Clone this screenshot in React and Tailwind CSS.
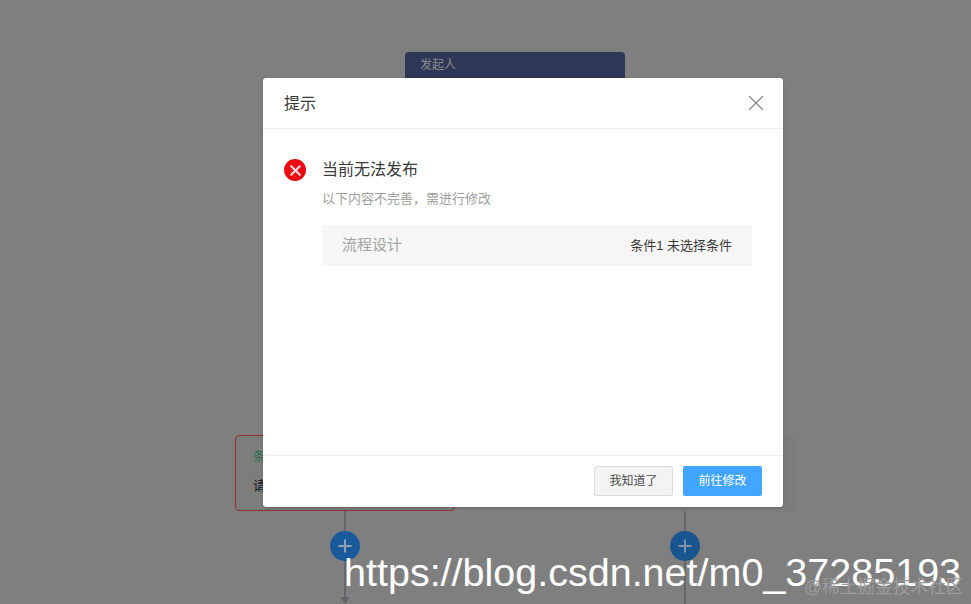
import React from 'react'
import { X, Plus } from 'lucide-react'

const cjk = 'font-["Liberation_Sans","Noto_Sans_CJK_SC",sans-serif]'

// flow diagram lying behind the dialog
const FlowCanvas = () => (
  <div className="absolute inset-0">
    <div className="absolute left-[405px] top-[52px] w-[220px] h-[40px] rounded-t-[4px] bg-[#2f3757] pl-[15px] pt-[5px] text-[12px] leading-[17px] text-[#8b8c90]">
      发起人
    </div>

    <div className="absolute left-[235px] top-[435px] w-[220px] h-[76px] rounded-[4px] border border-[#8e3236] bg-[#7d7d7d] pl-[17px] pt-[11px]">
      <div className="text-[12px] leading-[20px] text-[#1f6f4a]">条件1</div>
      <div className="mt-[9px] text-[13px] leading-[20px] text-[#161616]">请设置条件</div>
    </div>
    <div className="absolute left-[575px] top-[435px] w-[220px] h-[76px] rounded-[4px] bg-[#7c7c7c]" />

    <div className="absolute left-[344px] top-[511px] w-[2px] h-[90px] bg-[#666668]" />
    <div className="absolute left-[684px] top-[511px] w-[2px] h-[93px] bg-[#666668]" />
    <div className="absolute left-[340px] top-[597px] w-0 h-0 border-x-[5px] border-x-transparent border-t-[7px] border-t-[#666668]" />

    <div className="absolute left-[330px] top-[531px] w-[30px] h-[30px] rounded-full bg-[#1a5a9a] flex items-center justify-center">
      <Plus className="w-[20px] h-[20px] text-[#8fa2b6]" strokeWidth={2.4} />
    </div>
    <div className="absolute left-[670px] top-[531px] w-[30px] h-[30px] rounded-full bg-[#195690] flex items-center justify-center">
      <Plus className="w-[20px] h-[20px] text-[#7f94aa]" strokeWidth={2.4} />
    </div>
  </div>
)

const Dialog = () => (
  <div className="absolute left-[263px] top-[78px] w-[520px] h-[429px] rounded-[3px] bg-white flex flex-col shadow-[0_1px_3px_rgba(0,0,0,0.2)]">
    <div className="h-[51px] shrink-0 border-b border-[#eeeeee] flex items-center justify-between pl-[21px] pr-[14px]">
      <span className="mt-[1px] text-[16px] text-[#3a3a3a]">提示</span>
      <X className="w-[26px] h-[26px] text-[#808080]" strokeWidth={1} absoluteStrokeWidth />
    </div>

    <div className="flex-1 flex pl-[21px] pr-[31px] pt-[29px]">
      <div className="w-[22px] h-[22px] mt-[1px] rounded-full bg-[#ee0a12] flex items-center justify-center shrink-0">
        <X className="w-[17px] h-[17px] text-[#f7dcdc]" strokeWidth={3} />
      </div>
      <div className="ml-[16px] flex-1">
        <div className="text-[16px] leading-[24px] text-[#3a3a3a]">当前无法发布</div>
        <div className="mt-[8px] text-[13px] leading-[18px] text-[#a0a0a0]">以下内容不完善，需进行修改</div>
        <div className="mt-[17px] h-[41px] bg-[#f6f6f6] flex items-center justify-between pl-[20px] pr-[20px]">
          <span className="text-[15px] text-[#a3a3a3]">流程设计</span>
          <span className="text-[13px] text-[#3a3a3a]">条件1 未选择条件</span>
        </div>
      </div>
    </div>

    <div className="h-[52px] shrink-0 border-t border-[#eeeeee] flex items-start justify-end gap-[10px] pt-[10px] pr-[21px]">
      <button className="w-[79px] h-[30px] rounded-[2px] border border-[#dcdcdc] bg-[#f3f3f3] text-[12px] text-[#4a4a4a]">
        我知道了
      </button>
      <button className="w-[79px] h-[30px] rounded-[2px] bg-[#42a5ff] text-[12px] text-white">
        前往修改
      </button>
    </div>
  </div>
)

export default function App() {
  return (
    <div className={`relative w-full h-screen overflow-hidden bg-[#7f7f80] ${cjk}`}>
      <FlowCanvas />
      <Dialog />

      {/* image watermarks */}
      <div className="absolute left-[344px] top-[549px] text-[39.5px] leading-[47px] whitespace-nowrap text-white">
        https://blog.csdn.net/m0_37285193
      </div>
      <div className="absolute left-[804px] top-[575px] text-[17.7px] leading-[24px] whitespace-nowrap text-[#9c9c9c]">
        @稀土掘金技术社区
      </div>
    </div>
  )
}
